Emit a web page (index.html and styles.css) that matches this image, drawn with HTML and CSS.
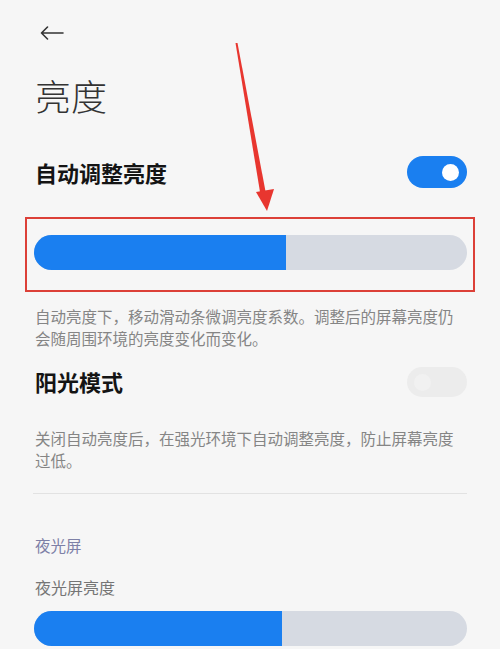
FILE: index.html
```html
<!DOCTYPE html>
<html lang="zh">
<head>
<meta charset="utf-8">
<link rel="stylesheet" href="styles.css">
</head>
<body>
<div class="page">
  <div class="header">
    <svg class="back" width="24" height="14" viewBox="0 0 24 14"><path d="M23 7H1.5M7.5 1L1.5 7l6 6" fill="none" stroke="#333" stroke-width="1.6" stroke-linecap="round" stroke-linejoin="round"/></svg>
  </div>
  <h1 class="title">亮度</h1>

  <div class="row row-auto">
    <span class="row-label">自动调整亮度</span>
    <span class="toggle on"><span class="knob"></span></span>
  </div>

  <div class="slider-wrap">
    <div class="slider"><div class="fill" style="width:58.2%"></div></div>
    <div class="highlight"></div>
  </div>

  <p class="desc desc-1">自动亮度下，移动滑动条微调亮度系数。调整后的屏幕亮度仍<br>会随周围环境的亮度变化而变化。</p>

  <div class="row row-sun">
    <span class="row-label">阳光模式</span>
    <span class="toggle off"><span class="knob"></span></span>
  </div>

  <p class="desc desc-2">关闭自动亮度后，在强光环境下自动调整亮度，防止屏幕亮度<br>过低。</p>

  <div class="divider"></div>

  <div class="section">夜光屏</div>
  <div class="item-label">夜光屏亮度</div>
  <div class="slider slider-night"><div class="fill" style="width:57.3%"></div></div>
</div>

<svg class="annot-arrow" width="500" height="649" viewBox="0 0 500 649">
  <polygon points="235.5,43 237.5,43 266,194 260.5,195" fill="#e8362f"/>
  <polygon points="256,192 274,189 267,211" fill="#e8362f"/>
</svg>
</body>
</html>
```

FILE: styles.css
```css
html, body {
  margin: 0;
  padding: 0;
  background: #f6f6f6;
}
body {
  font-family: "Noto Sans CJK SC", "Noto Sans", sans-serif;
  width: 500px;
  height: 649px;
  overflow: hidden;
  position: relative;
}
.page {
  padding: 0 33px 0 35px;
}
.header {
  height: 66px;
  display: flex;
  align-items: center;
}
.back {
  margin-left: 5px;
  display: block;
}
.title {
  margin: 4px 0 0 0;
  font-size: 36px;
  line-height: 50px;
  font-weight: 300;
  color: #333;
}
.row {
  display: flex;
  align-items: center;
  justify-content: space-between;
  height: 32px;
}
.row-auto {
  margin-top: 36px;
}
.row-sun {
  margin-top: 16px;
}
.row-label {
  font-size: 22px;
  font-weight: 700;
  color: #141414;
  line-height: 32px;
}
.toggle {
  width: 60px;
  height: 32px;
  border-radius: 16px;
  position: relative;
  display: block;
}
.toggle .knob {
  position: absolute;
  top: 7.5px;
  width: 17px;
  height: 17px;
  border-radius: 50%;
}
.toggle.on {
  background: #1a7ff0;
}
.toggle.on .knob {
  right: 8px;
  background: #fff;
}
.toggle.off {
  background: #ececec;
  height: 30px;
  margin-top: 2px;
}
.toggle.off .knob {
  left: 7px;
  top: 6.5px;
  background: #f1f1f1;
}
.slider-wrap {
  position: relative;
  margin-top: 47px;
}
.slider {
  height: 35px;
  border-radius: 18px;
  background: #d6dae2;
  overflow: hidden;
  margin-left: -1px;
}
.fill {
  height: 100%;
  background: #1a7ff0;
}
.highlight {
  position: absolute;
  left: -10px;
  right: -8px;
  top: -18px;
  bottom: -22px;
  border: 2px solid #dc4038;
  box-sizing: border-box;
}
.desc {
  margin: 0;
  font-size: 15.5px;
  line-height: 22px;
  color: #858585;
  white-space: nowrap;
}
.desc-1 {
  margin-top: 35px;
}
.desc-2 {
  margin-top: 30px;
}
.divider {
  height: 1px;
  background: #e2e2e2;
  margin: 22px 0 0 -2px;
}
.section {
  margin-top: 40px;
  font-size: 15.5px;
  line-height: 22px;
  color: #7d80a6;
}
.item-label {
  margin-top: 20px;
  font-size: 16px;
  line-height: 22px;
  color: #757575;
}
.slider-night {
  margin-top: 13px;
}
.annot-arrow {
  position: absolute;
  left: 0;
  top: 0;
  pointer-events: none;
}
```
